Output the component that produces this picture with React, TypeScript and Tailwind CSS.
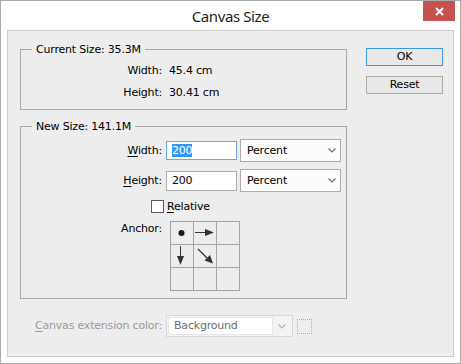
import React from 'react'

const ui = "font-['DejaVu_Sans',Tahoma,sans-serif] text-[11px] tracking-[-0.2px] leading-[16px] text-black"

function Chevron({ color }: { color: string }) {
  return (
    <svg width="8" height="5" viewBox="0 0 8 5">
      <path d="M0.5 0.5 L4 4 L7.5 0.5" fill="none" stroke={color} strokeWidth="1.2" />
    </svg>
  )
}

function Dropdown({ value }: { value: string }) {
  return (
    <div className="w-[101px] h-[23px] border border-[#acacac] bg-[#fcfcfc] flex items-center pl-[6px] pr-[4px]">
      <span className="flex-1">{value}</span>
      <Chevron color="#707070" />
    </div>
  )
}

function Dot() {
  return (
    <svg width="22" height="22" viewBox="0 0 22 22">
      <circle cx="10.5" cy="11" r="3" fill="#1a1a1a" />
    </svg>
  )
}

function ArrowRight() {
  return (
    <svg width="22" height="22" viewBox="0 0 22 22">
      <path d="M1 10.5 H13" stroke="#333" strokeWidth="1" />
      <path d="M11 7 L20 10.5 L11 14 Z" fill="#333" />
    </svg>
  )
}

function ArrowDown() {
  return (
    <svg width="22" height="22" viewBox="0 0 22 22">
      <path d="M9.5 1 V13" stroke="#333" strokeWidth="1" />
      <path d="M6 11 L9.5 20 L13 11 Z" fill="#333" />
    </svg>
  )
}

function ArrowDiag() {
  return (
    <svg width="22" height="22" viewBox="0 0 22 22">
      <path d="M4 4 L13 13" stroke="#333" strokeWidth="1.2" />
      <path d="M10.5 15.5 L19 18.5 L16 10 Z" fill="#333" />
    </svg>
  )
}

function AnchorGrid() {
  const cells = [<Dot />, <ArrowRight />, null, <ArrowDown />, <ArrowDiag />, null, null, null, null]
  return (
    <div className="grid grid-cols-[22px_22px_22px] grid-rows-[22px_22px_22px] gap-px bg-[#a3a3a3] p-px w-max">
      {cells.map((c, i) => (
        <div key={i} className="bg-[#ededed]">
          {c}
        </div>
      ))}
    </div>
  )
}

export default function App() {
  return (
    <div className={`${ui} w-[461px] h-[364px] bg-white border border-[#ababab] flex flex-col`}>
      {/* title bar */}
      <div className="relative h-[29px] flex items-center justify-center">
        <span className="font-['Noto_Sans',sans-serif] text-[15px] tracking-[-0.4px] text-[#1e1e1e] pt-px">
          Canvas Size
        </span>
        <div className="absolute top-0 right-[5px] w-[32px] h-[20px] bg-[#c75050] flex items-center justify-center">
          <svg width="9" height="9" viewBox="0 0 9 9">
            <path d="M1 1 L8 8 M8 1 L1 8" stroke="#fff" strokeWidth="2" />
          </svg>
        </div>
      </div>

      {/* client area */}
      <div className="mx-[6px] h-[327px] border border-[#cccccc] bg-[#ededed] pt-[12px] pl-[12px] flex">
        <div className="w-[327px] flex flex-col">
          {/* Current size */}
          <fieldset className="border border-[#a9a9a9] pb-[8px]">
            <legend className="ml-[11px] px-[4px] leading-[13px]">Current Size: 35.3M</legend>
            <div className="pt-[7px] flex flex-col gap-[6px]">
              <div className="flex">
                <span className="w-[141px] text-right">Width:</span>
                <span className="ml-[7px]">45.4 cm</span>
              </div>
              <div className="flex">
                <span className="w-[141px] text-right">Height:</span>
                <span className="ml-[7px]">30.41 cm</span>
              </div>
            </div>
          </fieldset>

          {/* New size */}
          <fieldset className="mt-[10px] border border-[#a9a9a9] pb-[7px]">
            <legend className="ml-[11px] px-[4px] leading-[13px]">New Size: 141.1M</legend>
            <div className="pt-[6px] flex flex-col">
              <div className="flex items-center h-[23px]">
                <span className="w-[141px] text-right">
                  <u className="underline-offset-2">W</u>idth:
                </span>
                <div className="ml-[4px] w-[71px] h-[19px] border border-[#6aa7e6] bg-white flex items-center pl-[5px]">
                  <span className="bg-[#3399ff] text-white leading-[13px]">200</span>
                </div>
                <div className="ml-[3px]">
                  <Dropdown value="Percent" />
                </div>
              </div>
              <div className="mt-[7px] flex items-center h-[23px]">
                <span className="w-[141px] text-right">
                  <u className="underline-offset-2">H</u>eight:
                </span>
                <div className="ml-[4px] w-[71px] h-[20px] border border-[#abadb3] bg-white flex items-center pl-[5px]">
                  200
                </div>
                <div className="ml-[3px]">
                  <Dropdown value="Percent" />
                </div>
              </div>
              <div className="mt-[8px] flex items-center h-[13px]">
                <div className="ml-[130px] w-[13px] h-[13px] border border-[#5c5c5c] bg-white" />
                <span className="ml-[3px]">
                  <u className="underline-offset-2">R</u>elative
                </span>
              </div>
              <div className="mt-[8px] flex items-start">
                <span className="w-[141px] text-right">Anchor:</span>
                <div className="ml-[8px]">
                  <AnchorGrid />
                </div>
              </div>
            </div>
          </fieldset>

          {/* Canvas extension color */}
          <div className="mt-[16px] flex items-center text-[#9a9a9a]">
            <span className="w-[142px] text-right">
              <u className="underline-offset-2">C</u>anvas extension color:
            </span>
            <div className="ml-[4px] w-[127px] h-[22px] border border-[#d9d9d9] bg-[#f3f3f3] flex items-center p-px">
              <div className="w-[105px] h-full bg-white border border-[#e6e6e6] flex items-center pl-[5px] text-[#6d6d6d]">
                Background
              </div>
              <div className="flex-1 flex items-center justify-center">
                <Chevron color="#b4b4b4" />
              </div>
            </div>
            <div className="ml-[4px] w-[15px] h-[15px] border border-dotted border-[#b0b0b0]" />
          </div>
        </div>

        {/* buttons */}
        <div className="ml-[19px] mt-[5px] flex flex-col gap-[10px]">
          <div className="w-[77px] h-[18px] border border-[#3c98ee] bg-[#e8e8e8] flex items-center justify-center">
            OK
          </div>
          <div className="w-[77px] h-[18px] border border-[#adadad] bg-[#e8e8e8] flex items-center justify-center">
            Reset
          </div>
        </div>
      </div>
    </div>
  )
}
